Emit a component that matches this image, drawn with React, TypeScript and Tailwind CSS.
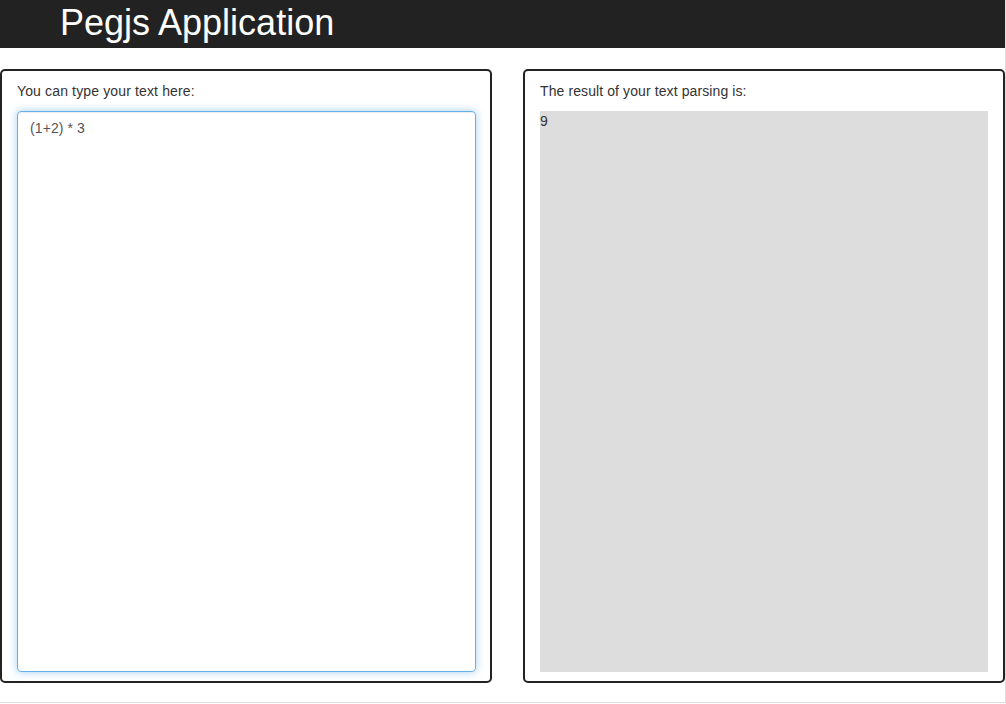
import { useState } from 'react';

export default function App() {
  const [text, setText] = useState('(1+2) * 3');

  // tiny evaluator for + - * / and parentheses, good enough for the demo
  const evaluate = (src: string): string => {
    try {
      if (!/^[\d\s+\-*/().]*$/.test(src)) return 'Error';
      // eslint-disable-next-line no-new-func
      const v = Function(`return (${src || 0})`)();
      return String(v);
    } catch {
      return 'Error';
    }
  };

  return (
    <div className="w-[1006px] h-[704px] bg-white font-['Liberation_Sans',Arial,sans-serif] text-[#333]">
      <div className="w-[1006px] h-[703px] border-r border-b border-[#ddd]">
        <header className="h-[48px] bg-[#222] pl-[60px] flex items-center">
          <h1 className="text-white text-[36px] leading-none -mt-[2px]">Pegjs Application</h1>
        </header>

        <div className="flex mt-[21px] gap-[31px]">
          <section className="w-[492px] h-[614px] border-2 border-[#222] rounded-[5px] px-[15px] pt-[10px] pb-[9px] flex flex-col">
            <label className="text-[14px] leading-[20px] tracking-[0.14px] mb-[10px]">You can type your text here:</label>
            <textarea
              autoFocus
              value={text}
              onChange={(e) => setText(e.target.value)}
              className="flex-1 w-[459px] resize-none rounded-[4px] border border-[#66afe9] px-[12px] py-[6px] text-[14px] leading-[20px] tracking-[0.1px] text-[#555] outline-none shadow-[inset_0_1px_1px_rgba(0,0,0,0.075),0_0_8px_rgba(102,175,233,0.6)]"
            />
          </section>

          <section className="w-[482px] h-[614px] border-2 border-[#222] rounded-[5px] px-[15px] pt-[10px] pb-[9px] flex flex-col">
            <label className="text-[14px] leading-[20px] tracking-[0.1px] mb-[10px]">The result of your text parsing is:</label>
            <div className="flex-1 bg-[#ddd] text-[14px] leading-[20px] whitespace-pre">{evaluate(text)}</div>
          </section>
        </div>
      </div>
    </div>
  );
}
